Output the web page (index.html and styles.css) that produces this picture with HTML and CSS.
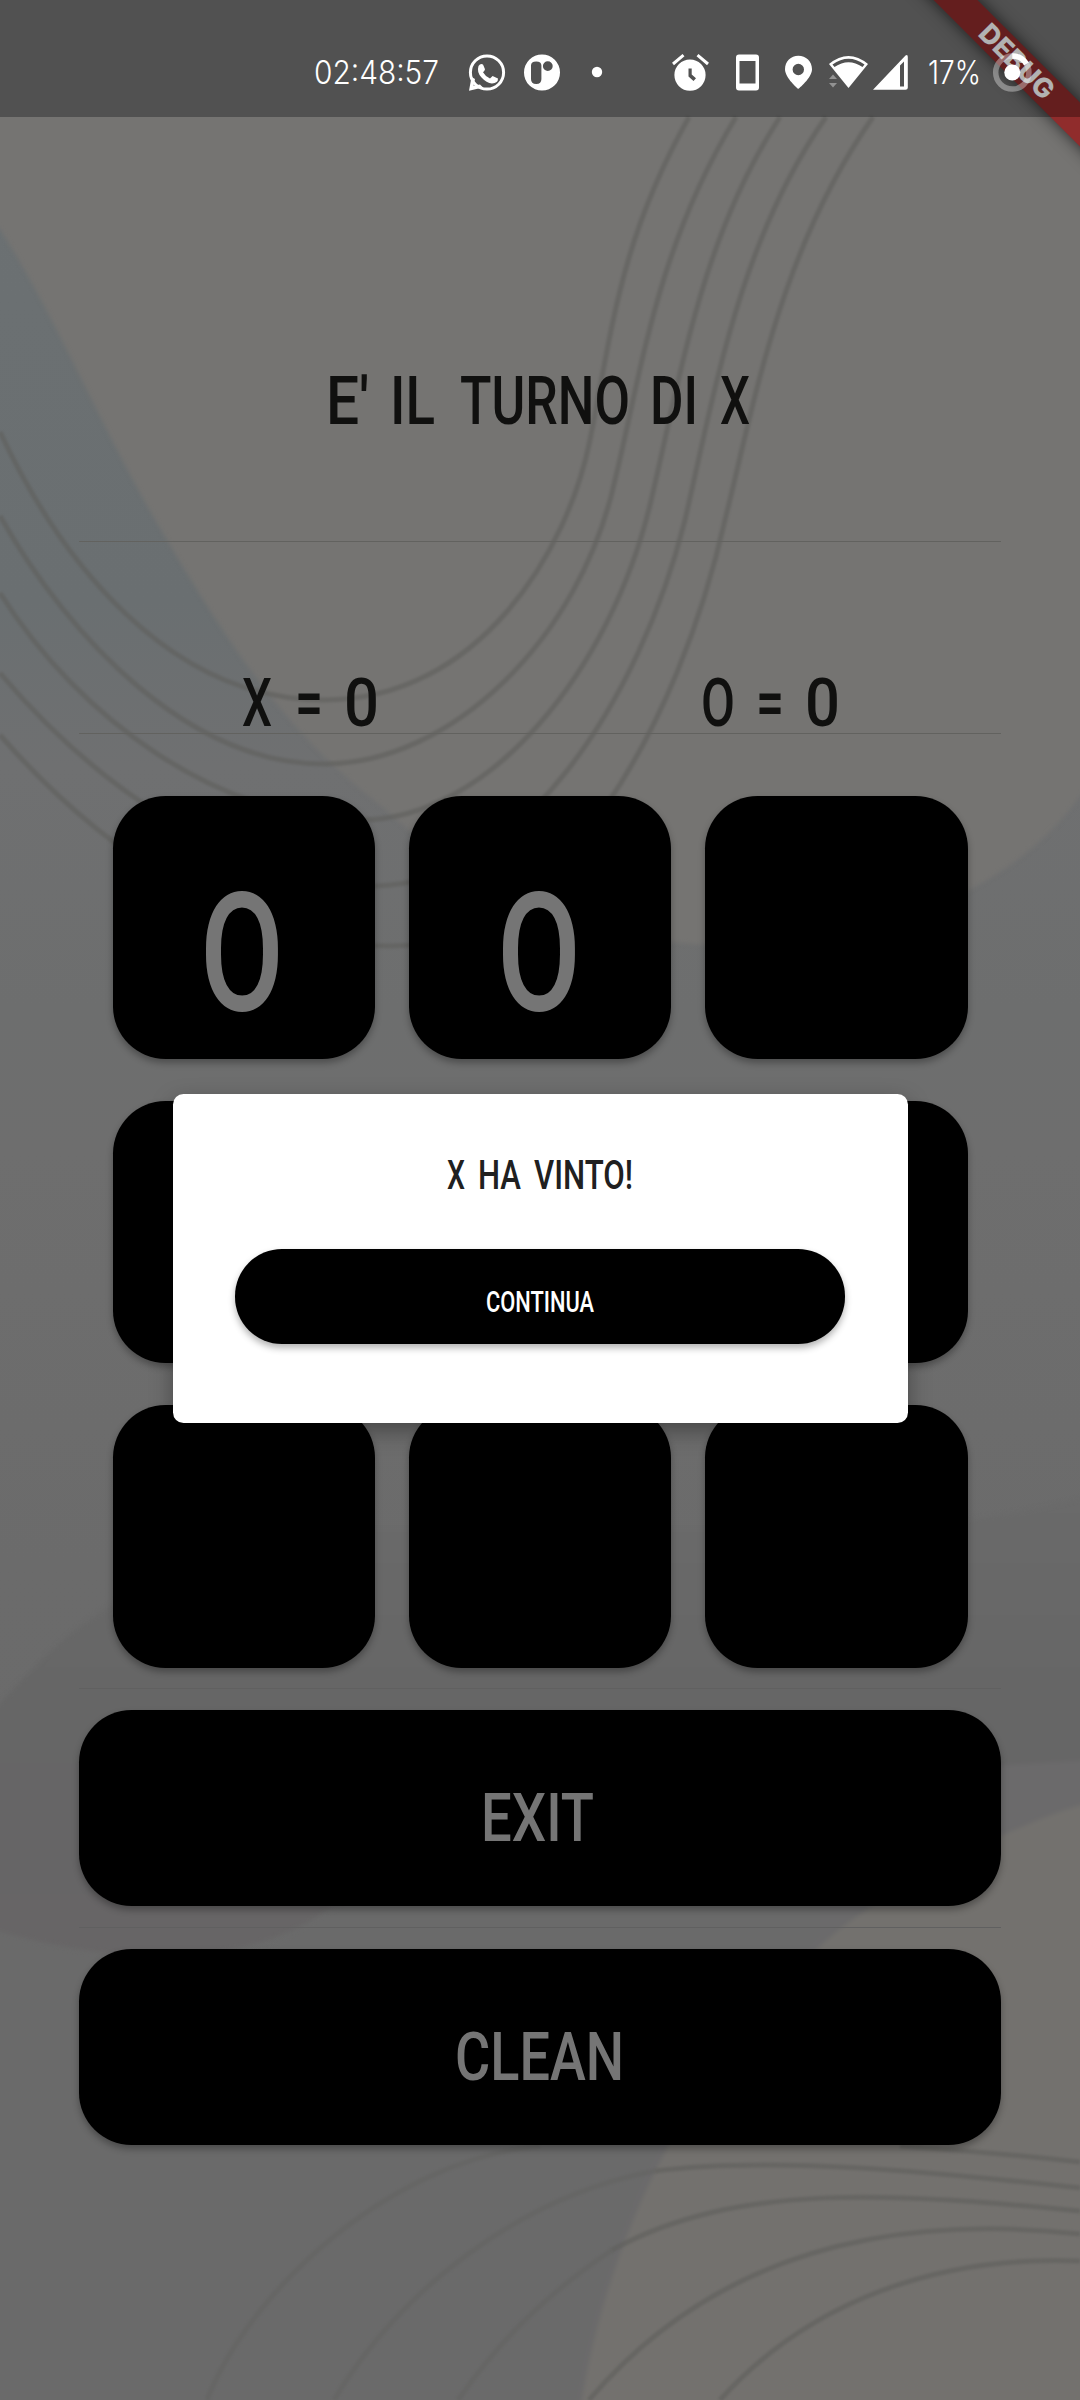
FILE: index.html
```html
<!DOCTYPE html>
<html lang="it">
<head>
<meta charset="utf-8">
<title>Tris</title>
<link rel="stylesheet" href="styles.css">
</head>
<body>
<div class="screen">
  <svg class="backdrop" viewBox="0 0 1080 2400" aria-hidden="true">
    <defs>
      <linearGradient id="base" x1="0" y1="0" x2="0" y2="1">
        <stop offset="0" stop-color="#6c7173"/><stop offset=".25" stop-color="#6a6f71"/>
        <stop offset=".32" stop-color="#6f7071"/><stop offset=".42" stop-color="#6d6e6e"/>
        <stop offset=".48" stop-color="#6e6e6e"/><stop offset=".65" stop-color="#6b6b6b"/><stop offset="1" stop-color="#6a6a6a"/>
      </linearGradient>
      <linearGradient id="band" x1="0" y1="0" x2="0" y2="1">
        <stop offset="0" stop-color="#6a6a6a"/><stop offset=".45" stop-color="#666"/><stop offset="1" stop-color="#676566"/>
      </linearGradient>
      <linearGradient id="low" x1="0" y1="0" x2="1" y2="0">
        <stop offset="0" stop-color="#6a6a6a"/><stop offset="1" stop-color="#6b6a6b"/>
      </linearGradient>
      <filter id="soft" color-interpolation-filters="sRGB"><feGaussianBlur stdDeviation="2"/></filter>
    </defs>
    <rect width="1080" height="2400" fill="url(#base)"/>
    <g filter="url(#soft)">
      <path fill="#757472" d="M-10 -10H1090V782C1040 860 960 905 860 930C700 970 520 935 380 805C310 750 255 690 170 545C100 430 50 300 -10 215Z"/>
      <path fill="url(#band)" d="M-10 1715C90 1600 150 1570 320 1530H800C900 1530 1000 1520 1090 1496V1850L330 1907C260 1965 120 1970 -10 1928Z"/>
      <path fill="url(#low)" d="M-10 1928C120 1970 220 1965 275 1946C400 1850 700 1780 1090 1760V2410H-10Z"/>
      <path fill="#73716e" d="M1090 1802C1010 1825 880 1890 820 1946C700 2060 610 2220 580 2410H1090Z"/>
    </g>
    <rect width="1080" height="117" fill="#747474"/>
    <g class="waves">
      <path d="M689 117C620 240 612 330 590 440S480 700 324 700S60 560 0 432"/>
      <path d="M736 117C655 250 640 380 615 480C580 640 450 764 324 764C190 764 70 640 0 516"/>
      <path d="M780 117C700 240 680 380 650 505C610 670 490 820 360 820C220 820 80 720 0 593"/>
      <path d="M826 117C740 240 715 390 685 520C640 700 520 885 375 886C230 884 90 780 0 673"/>
      <path d="M873 117C780 250 755 400 725 520C680 720 560 946 390 946C240 946 100 850 0 735"/>
      <path class="faint" d="M207 2400C250 2290 390 2160 540 2146"/>
      <path d="M900 2146Q990 2152 1080 2162"/>
      <path class="faint" d="M334 2400C400 2290 520 2196 655 2171"/>
      <path d="M655 2171C780 2155 950 2174 1080 2188"/>
      <path class="faint" d="M458 2400C500 2340 545 2295 612 2250"/>
      <path d="M612 2250C740 2180 900 2194 1080 2211"/>
      <path d="M589 2400C700 2270 860 2210 1080 2234"/>
      <path d="M720 2400C810 2300 940 2255 1080 2261"/>
    </g>
  </svg>

  <main class="game">
    <section class="turn">
      <svg class="lcd" width="922" height="72" viewBox="79 364 922 72" font-size="67.5">
        <text x="326" y="424" textLength="43" lengthAdjust="spacingAndGlyphs">E'</text>
        <text x="390" y="424" textLength="45" lengthAdjust="spacingAndGlyphs">IL</text>
        <text x="460" y="424" textLength="170" lengthAdjust="spacingAndGlyphs">TURNO</text>
        <text x="650" y="424" textLength="48" lengthAdjust="spacingAndGlyphs">DI</text>
        <text x="720" y="424" textLength="30" lengthAdjust="spacingAndGlyphs">X</text>
      </svg>
    </section>
    <section class="score">
      <svg class="lcd" width="461" height="54" viewBox="79 676 461 54" font-size="67.5">
        <text x="242" y="726" textLength="30" lengthAdjust="spacingAndGlyphs">X</text>
        <text x="295" y="726" textLength="28" lengthAdjust="spacingAndGlyphs">=</text>
        <text x="344" y="726" textLength="35" lengthAdjust="spacingAndGlyphs">0</text>
      </svg>
      <svg class="lcd" width="461" height="54" viewBox="540 676 461 54" font-size="67.5">
        <text x="701" y="726" textLength="34" lengthAdjust="spacingAndGlyphs">O</text>
        <text x="756" y="726" textLength="28" lengthAdjust="spacingAndGlyphs">=</text>
        <text x="805" y="726" textLength="35" lengthAdjust="spacingAndGlyphs">0</text>
      </svg>
    </section>
    <section class="board">
      <div class="cell"><svg class="lcd dim" width="100" height="130" viewBox="0 0 100 130"><text x="8" y="123" font-size="166" textLength="84" lengthAdjust="spacingAndGlyphs">O</text></svg></div>
      <div class="cell"><svg class="lcd dim" width="100" height="130" viewBox="0 0 100 130"><text x="8" y="123" font-size="166" textLength="84" lengthAdjust="spacingAndGlyphs">O</text></svg></div>
      <div class="cell"></div><div class="cell"></div><div class="cell"></div><div class="cell"></div><div class="cell"></div><div class="cell"></div><div class="cell"></div>
    </section>
    <div class="rule"></div>
    <div class="action"><svg class="lcd dim" width="200" height="60" viewBox="440 1787 200 60"><text x="481" y="1841" font-size="67.5" textLength="113" lengthAdjust="spacingAndGlyphs">EXIT</text></svg></div>
    <div class="rule"></div>
    <div class="action"><svg class="lcd dim" width="200" height="60" viewBox="440 2026 200 60"><text x="455" y="2080" font-size="67.5" textLength="169" lengthAdjust="spacingAndGlyphs">CLEAN</text></svg></div>
  </main>

  <div class="dialog">
    <svg class="lcd title" width="400" height="40" viewBox="340 1154 400 40" font-size="41">
      <text x="447" y="1189" textLength="18" lengthAdjust="spacingAndGlyphs">X</text>
      <text x="478" y="1189" textLength="43" lengthAdjust="spacingAndGlyphs">HA</text>
      <text x="534" y="1189" textLength="99" lengthAdjust="spacingAndGlyphs">VINTO!</text>
    </svg>
    <div class="continue"><svg class="lcd bright" width="200" height="30" viewBox="440 1286 200 30"><text x="486" y="1312" font-size="29.5" textLength="108" lengthAdjust="spacingAndGlyphs">CONTINUA</text></svg></div>
  </div>

  <div class="corner">
    <div class="ribbon">DEBUG</div>
  </div>

  <svg class="status" viewBox="0 0 1080 117">
    <rect width="1080" height="117" fill="#000" fill-opacity=".3"/>
    <g fill="#fff">
      <text x="314" y="84" font-size="32" textLength="125" lengthAdjust="spacingAndGlyphs">02:48:57</text>
      <circle cx="487" cy="72.500" r="16.600" fill="none" stroke="#fff" stroke-width="3"/>
      <path d="M471.500 77L469 90.800L483 87.500L480 84.500L473.500 85.800L475 79Z"/>
      <path d="M478.500 66q2-3 4.500-1.500l2 4.800q-.2 1.500-2 3 2.700 4.600 7 6.300l2.600-2.700 5.400 2.700q.2 4.700-6 5-5.500-.5-10.500-6t-3-11.600Z"/>
      <path fill-rule="evenodd" d="M542 54.500a18 18 0 1 0 0 36a18 18 0 1 0 0-36ZM531 65.500q0-4 5.200-4t5.200 4V79q0 5-5.200 5T531 79ZM547.800 61.200a4.900 4.900 0 1 1 0 9.800a4.900 4.900 0 1 1 0-9.800Z"/>
      <circle cx="597" cy="72" r="5.200"/>
      <path fill-rule="evenodd" d="M690 59.500a15.600 15.600 0 1 0 0 31.200a15.600 15.600 0 1 0 0-31.200ZM688.500 68.500h3.200v6l4.300 3.700-2.500 2.800-5-4.500Z"/>
      <path fill="none" stroke="#fff" stroke-width="3" d="M673 64L683.500 55.200M697.500 55.200L708 64"/>
      <path fill-rule="evenodd" d="M739 54.500h17q3 0 3 3V87.500q0 3-3 3H739q-3 0-3-3V57.500q0-3 3-3ZM739.500 61V83.500H755.500V61Z"/>
      <path fill-rule="evenodd" d="M798.300 55.800C791 55.800 785 61.500 785 69.300C785 78 798.300 89 798.300 89S812 78 812 69.300C812 61.500 806 55.800 798.300 55.800ZM798.300 63.800a5.700 5.700 0 1 1 0 11.400a5.700 5.700 0 1 1 0-11.400Z"/>
      <path fill-rule="evenodd" d="M829 64Q848.500 48 868 64L848.500 88ZM832.500 64.500L834.500 67Q848.500 57.500 862.500 67L864.500 64.500Q848.500 53 832.500 64.500Z"/>
      <path fill="#929292" d="M829 79L833 74.500L837 79ZM829 83L833 87.500L837 83Z"/>
      <path fill-rule="evenodd" d="M873 89.800L905.500 55.500Q907.800 54 907.800 57V87.800Q907.800 89.800 905.500 89.800ZM900 65.500V86.500H904V61.500Z"/>
      <text x="928" y="84" font-size="32" textLength="53" lengthAdjust="spacingAndGlyphs">17%</text>
      <circle cx="1012.300" cy="72.500" r="16.600" fill="none" stroke="#fff" stroke-opacity=".35" stroke-width="5.500"/>
      <path fill="none" stroke="#fff" stroke-width="5.500" d="M1012.300 55.900A16.600 16.600 0 0 1 1026.500 64"/>
      <circle cx="1012.300" cy="72.500" r="8"/>
    </g>
  </svg>
</div>
</body>
</html>
```
FILE: styles.css
```css
body { margin: 0; }
.screen { position: relative; width: 1080px; height: 2400px; overflow: hidden; background: #6c6c6c; }
.backdrop { position: absolute; inset: 0; width: 1080px; height: 2400px; }
.waves path { fill: none; stroke: #5f5f5c; stroke-width: 5; opacity: .6; filter: blur(1.2px); }
.waves .faint { opacity: .35; }

.game { position: relative; display: flex; flex-direction: column; padding: 117px 79px 0; }
.lcd { display: block; overflow: visible; fill: #10100f; font-family: Roboto, "Liberation Sans", sans-serif; font-weight: 500; }
.lcd.dim { fill: #757575; }
.lcd.bright { fill: #fff; }

.turn { height: 425px; padding-top: 247px; box-sizing: border-box; border-bottom: 1px solid #62625f; }
.turn svg, .score svg { flex: none; }
.score { display: flex; align-items: flex-end; height: 192px; padding-bottom: 3px; box-sizing: border-box; border-bottom: 1px solid #62625f; }
.board { display: grid; grid-template-columns: repeat(3, 262.5px); grid-auto-rows: 262.5px; column-gap: 33.8px; row-gap: 42px; padding: 62px 33.5px 20.5px; }
.cell, .action, .continue { display: flex; align-items: center; justify-content: center; background: #000; box-shadow: 0 4px 7px rgba(0, 0, 0, .3); }
.cell { border-radius: 52.5px; }
.cell svg { margin: 49px 3px 0 0; }
.rule { height: 1px; background: #606060; }
.action { height: 196.5px; margin: 20.75px 0; border-radius: 52.5px; }
.action svg { margin-top: 18px; }

.dialog { position: absolute; left: 172.5px; top: 1094px; width: 735px; height: 328.5px; padding: 60px 62.5px 0; box-sizing: border-box; border-radius: 10.5px; background: #fff; box-shadow: 0 8px 22px rgba(0, 0, 0, .35); }
.dialog .title { margin: 0 auto 55px; fill: #202020; }
.continue { height: 94.5px; border-radius: 47px; }
.continue svg { margin-top: 10px; }

.corner { position: absolute; top: 0; right: 0; width: 240px; height: 240px; overflow: hidden; }
.ribbon { position: absolute; left: 27px; top: 46px; width: 300px; height: 31px; background: #902c2c; box-shadow: 0 0 16px rgba(0, 0, 0, .65); color: #fff; font: 800 27px/31px Inter, sans-serif; text-align: center; transform: rotate(45deg); }
.status { position: absolute; left: 0; top: 0; width: 1080px; height: 117px; }
.status text { font-family: Inter, Roboto, sans-serif; font-weight: 300; }
```
